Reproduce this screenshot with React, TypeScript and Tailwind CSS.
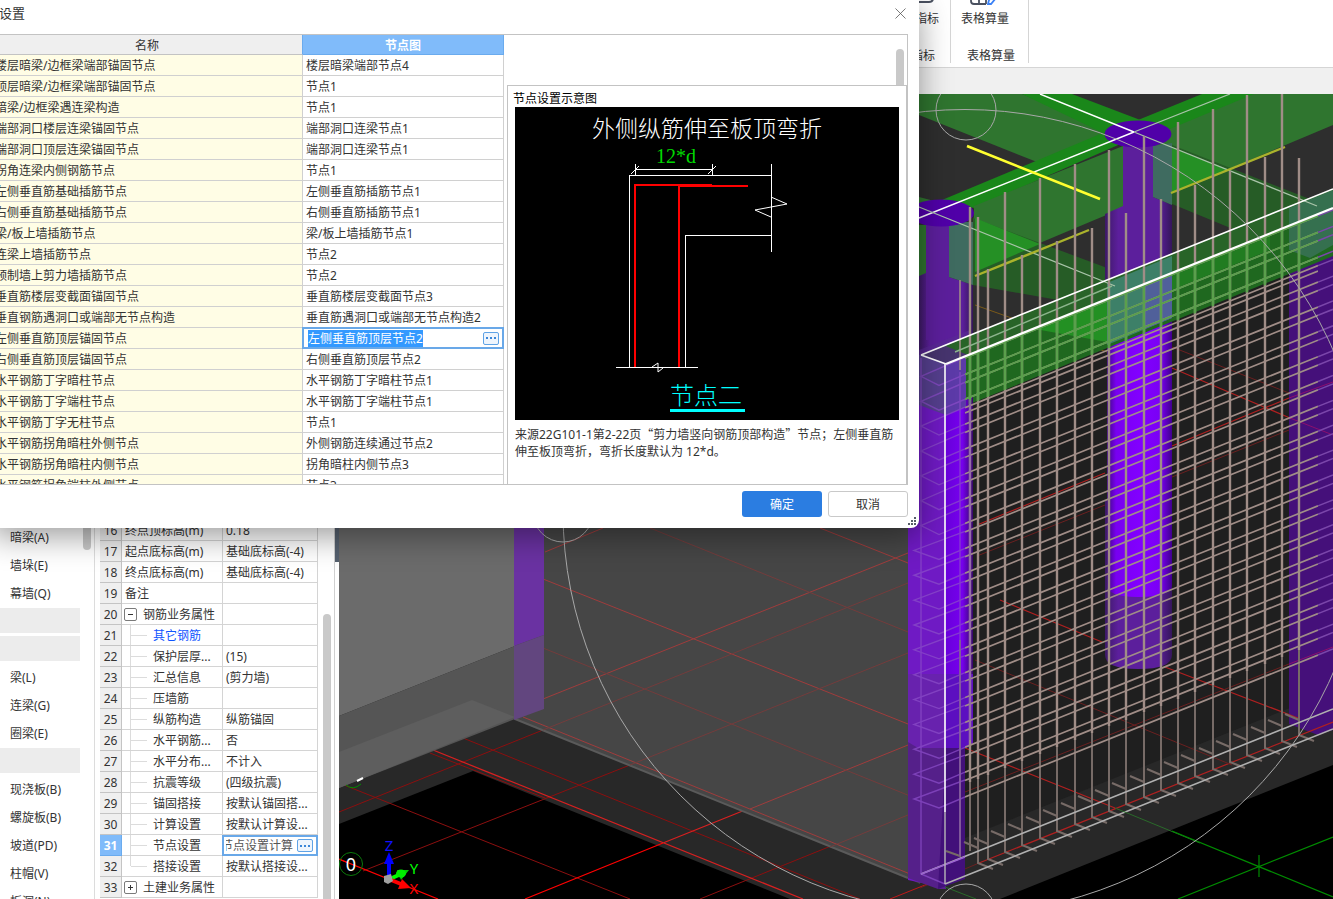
import React from "react";
import { X } from "lucide-react";

const nodeRows: [string, string][] = [
  ["楼层暗梁/边框梁端部锚固节点", "楼层暗梁端部节点4"],
  ["顶层暗梁/边框梁端部锚固节点", "节点1"],
  ["暗梁/边框梁遇连梁构造", "节点1"],
  ["端部洞口楼层连梁锚固节点", "端部洞口连梁节点1"],
  ["端部洞口顶层连梁锚固节点", "端部洞口连梁节点1"],
  ["拐角连梁内侧钢筋节点", "节点1"],
  ["左侧垂直筋基础插筋节点", "左侧垂直筋插筋节点1"],
  ["右侧垂直筋基础插筋节点", "右侧垂直筋插筋节点1"],
  ["梁/板上墙插筋节点", "梁/板上墙插筋节点1"],
  ["连梁上墙插筋节点", "节点2"],
  ["预制墙上剪力墙插筋节点", "节点2"],
  ["垂直筋楼层变截面锚固节点", "垂直筋楼层变截面节点3"],
  ["垂直钢筋遇洞口或端部无节点构造", "垂直筋遇洞口或端部无节点构造2"],
  ["左侧垂直筋顶层锚固节点", "左侧垂直筋顶层节点2"],
  ["右侧垂直筋顶层锚固节点", "右侧垂直筋顶层节点2"],
  ["水平钢筋丁字暗柱节点", "水平钢筋丁字暗柱节点1"],
  ["水平钢筋丁字端柱节点", "水平钢筋丁字端柱节点1"],
  ["水平钢筋丁字无柱节点", "节点1"],
  ["水平钢筋拐角暗柱外侧节点", "外侧钢筋连续通过节点2"],
  ["水平钢筋拐角暗柱内侧节点", "拐角暗柱内侧节点3"],
  ["水平钢筋拐角端柱外侧节点", "节点3"],
];
const EDITED_NODE = 13;

type Prop = { n: number; name: string; value: string; kind: "plain" | "open" | "closed" | "child" };
const propRows: Prop[] = [
  { n: 16, name: "终点顶标高(m)", value: "0.18", kind: "plain" },
  { n: 17, name: "起点底标高(m)", value: "基础底标高(-4)", kind: "plain" },
  { n: 18, name: "终点底标高(m)", value: "基础底标高(-4)", kind: "plain" },
  { n: 19, name: "备注", value: "", kind: "plain" },
  { n: 20, name: "钢筋业务属性", value: "", kind: "open" },
  { n: 21, name: "其它钢筋", value: "", kind: "child" },
  { n: 22, name: "保护层厚...", value: "(15)", kind: "child" },
  { n: 23, name: "汇总信息", value: "(剪力墙)", kind: "child" },
  { n: 24, name: "压墙筋", value: "", kind: "child" },
  { n: 25, name: "纵筋构造", value: "纵筋锚固", kind: "child" },
  { n: 26, name: "水平钢筋...", value: "否", kind: "child" },
  { n: 27, name: "水平分布...", value: "不计入", kind: "child" },
  { n: 28, name: "抗震等级", value: "(四级抗震)", kind: "child" },
  { n: 29, name: "锚固搭接", value: "按默认锚固搭...", kind: "child" },
  { n: 30, name: "计算设置", value: "按默认计算设...", kind: "child" },
  { n: 31, name: "节点设置", value: "节点设置计算", kind: "child" },
  { n: 32, name: "搭接设置", value: "按默认搭接设...", kind: "child" },
  { n: 33, name: "土建业务属性", value: "", kind: "closed" },
];

const navItems = ["暗梁(A)", "墙垛(E)", "幕墙(Q)", "", "", "梁(L)", "连梁(G)", "圈梁(E)", "", "现浇板(B)", "螺旋板(B)", "坡道(PD)", "柱帽(V)", "板洞(N)"];

function MoreButton({ label }: { label: string }) {
  return (
    <button aria-label={label} className="flex h-[13px] w-4 shrink-0 items-center justify-center gap-0.5 rounded-xs border border-[#5fa3e6] bg-[#eef5fd]">
      <span className="size-0.5 bg-[#3b86d8]" />
      <span className="size-0.5 bg-[#3b86d8]" />
      <span className="size-0.5 bg-[#3b86d8]" />
    </button>
  );
}

function Ribbon() {
  return (
    <header className="flex h-[68px] shrink-0 items-start overflow-hidden border-b border-[#d5d5d5] bg-white pl-[891px]">
      <div className="flex h-[63px] w-[60px] flex-col border-r border-[#d5d5d5]">
        <button className="flex w-12 flex-col items-end gap-1">
          <svg className="h-[7px] w-6" viewBox="0 0 24 7" fill="none" stroke="#4a5160" strokeWidth="2">
            <path d="M2 2h12q4 0 4-4" />
          </svg>
          <span>指标</span>
        </button>
        <span className="mt-[21px] w-11 text-right">指标</span>
      </div>
      <div className="flex h-[63px] w-[78px] flex-col border-r border-[#d5d5d5]">
        <button className="flex w-17 flex-col items-center gap-1">
          <svg className="h-[7px] w-8" viewBox="0 0 32 7" fill="none" stroke="#4a5160" strokeWidth="1.8">
            <path d="M2 -2v3q0 3 3 3h12M10 -2v6M17 0v4" />
            <path d="M27 -2l-5 6h-3l1-4 3-3" stroke="#3b82f6" />
          </svg>
          <span>表格算量</span>
        </button>
        <span className="mt-[21px] pl-4 whitespace-nowrap">表格算量</span>
      </div>
    </header>
  );
}

function ComponentNav() {
  return (
    <nav className="flex w-[95px] shrink-0 justify-between overflow-hidden border-r border-[#dcdcdc] bg-white pt-[429px]">
      <ul className="w-20">
        {navItems.map((t, i) => (
          <li key={i} className="h-7 pt-px">
            {t ? (
              <a href="#" className="block pl-2.5 leading-[27px]">{t}</a>
            ) : (
              <div className="h-[25px] bg-[#ececec]" />
            )}
          </li>
        ))}
      </ul>
      <div className="mr-[3px] h-[27px] w-2 rounded-b-full bg-[#c9c9c9]" />
    </nav>
  );
}

function PropName({ row }: { row: Prop }) {
  if (row.kind === "child") {
    return (
      <div className="flex h-5 items-center pl-2">
        <span className={row.n === 32 ? "h-2.5 w-px self-start bg-[#dcdcdc]" : "h-full w-px bg-[#dcdcdc]"} />
        <span className="h-px w-4 bg-[#dcdcdc]" />
        <span className={row.n === 21 ? "ml-1.5 pt-0.5 text-[#0f55ff]" : "ml-1.5 pt-0.5"}>{row.name}</span>
      </div>
    );
  }
  if (row.kind === "plain") return <div className="pt-0.5 pl-[3px]">{row.name}</div>;
  return (
    <div className="flex items-center gap-1.5 pl-0.5">
      <button aria-label={row.name} className="flex size-[13px] items-center justify-center rounded-xs border border-[#7a7a7a] bg-white">
        <svg className="size-[7px]" viewBox="0 0 7 7" stroke="#333" strokeWidth="1">
          <path d={row.kind === "open" ? "M1 3.5h5" : "M1 3.5h5M3.5 1v5"} />
        </svg>
      </button>
      <span className="pt-0.5">{row.name}</span>
    </div>
  );
}

function PropertyPanel() {
  return (
    <section className="flex w-[240px] shrink-0 overflow-hidden border-r border-[#d0d0d0] bg-white pt-[426px] pl-[5px]">
      <table className="w-[218px] shrink-0 table-fixed border-separate border-spacing-0 self-start">
        <colgroup>
          <col className="w-[22px]" />
          <col className="w-[101px]" />
          <col className="w-[95px]" />
        </colgroup>
        <tbody>
          {propRows.map((r) => {
            const on = r.n === 31;
            return (
              <tr key={r.n} className="h-[21px]">
                <th
                  className={
                    on
                      ? "h-[21px] border-r border-b border-[#6aabee] bg-[#80bbfa] p-0 pt-0.5 text-center font-bold text-white"
                      : "h-[21px] border-r border-b border-[#c4c4c4] bg-[#efefef] p-0 pt-0.5 text-center font-normal"
                  }
                >
                  {r.n}
                </th>
                <td className="border-r border-b border-[#d4d4d4] p-0 whitespace-nowrap"><PropName row={r} /></td>
                {on ? (
                  <td className="p-0">
                    <div className="-ml-px flex h-[21px] items-center gap-1 border-2 border-[#69a8e8] bg-white pr-[3px] pl-0.5">
                      <div className="flex flex-1 justify-end overflow-hidden">
                        <input aria-label="节点设置" defaultValue={r.value} className="w-[72px] shrink-0 text-[#555] outline-none" />
                      </div>
                      <MoreButton label="打开节点设置" />
                    </div>
                  </td>
                ) : (
                  <td className="border-r border-b border-[#d4d4d4] p-0 pt-0.5 pl-[3px] whitespace-nowrap">{r.value}</td>
                )}
              </tr>
            );
          })}
        </tbody>
      </table>
      <div className="mt-[94px] ml-[5px] w-2 rounded-t-full bg-[#c9c9c9]" />
    </section>
  );
}

/* Vertical bars of the wall: x and top. */
const bars: [number, number][] = [
  [970, 207], [978, 217], [988, 269], [1005, 192], [1022, 255], [1040, 178], [1057, 241], [1075, 164], [1092, 228], [1109, 150], [1126, 213],
  [1144, 136], [1161, 199], [1178, 122], [1195, 185], [1213, 109], [1230, 171], [1247, 95], [1265, 157], [1282, 90], [1299, 158],
];
/* Heights of the horizontal bars where they meet the end column. */
const levels = Array.from({ length: 18 }, (_, i) => 797 - i * 24.86);
const headLevels = Array.from({ length: 5 }, (_, i) => 797 - (i + 18) * 24.86);

function Scene() {
  return (
    <svg className="h-full w-full" viewBox="339 94 994 805" preserveAspectRatio="xMinYMin slice" role="img" aria-label="三维视图" fill="none">
      <defs>
        <linearGradient id="shaft" x1="0" x2="1">
          <stop offset="0" stopColor="#3f0a80" />
          <stop offset="0.14" stopColor="#7800f0" />
          <stop offset="0.5" stopColor="#8200ff" />
          <stop offset="0.82" stopColor="#7a00f5" />
          <stop offset="1" stopColor="#40008c" />
        </linearGradient>
        <linearGradient id="shaftDim" x1="0" x2="1">
          <stop offset="0" stopColor="#3d1a66" />
          <stop offset="0.2" stopColor="#5c1f9c" />
          <stop offset="0.8" stopColor="#5c1f9c" />
          <stop offset="1" stopColor="#35165a" />
        </linearGradient>
        <linearGradient id="cornerShaft" x1="0" x2="1">
          <stop offset="0" stopColor="#6a00dc" />
          <stop offset="0.6" stopColor="#7600ee" />
          <stop offset="1" stopColor="#36086a" />
        </linearGradient>
        <clipPath id="mesh">
          <path d="M965 358L1318 214V900H965Z" />
        </clipPath>
        <clipPath id="band">
          <path d="M965 356L1333 208V258L965 406Z" />
        </clipPath>
      </defs>
      <rect x="339" y="94" width="994" height="805" fill="#000" />
      {/* floor slab */}
      <path d="M339 824L473 771L790 899H1000L1333 765V500H339Z" fill="#282828" />
      <rect x="900" y="94" width="433" height="300" fill="#2e2e2e" />
      {/* floor grid */}
      <g stroke="#8c0f0f">
        <path d="M339 783L630 899M363 871L630 765M339 812L543 730M463 738L860 899M700 899L920 810M430 753L545 798" />
        <path d="M890 899L980 863" stroke="#c01818" />
      </g>
      <path d="M339 859L438 899M525 899L663 843" stroke="#ff0000" strokeWidth="1.2" />
      <path d="M663 843L760 804M433 750L803 899" stroke="#d82020" strokeWidth="1.2" />
      {/* far walls */}
      <path d="M515 500H920V884L908 878L515 719Z" fill="#464646" />
      <path d="M515 719L908 878" stroke="#5a5a5a" strokeWidth="2" />
      <g stroke="#a03c3c">
        <path d="M543 699L908 553M545 552L603 528M523 717L920 878M543 579L908 724M820 528L908 563M750 809L908 745" />
        <path d="M543 730L908 583M630 765L908 653M543 648L920 800M650 528L908 632M830 847L920 810" stroke="#743c3c" />
      </g>
      <path d="M339 500H515V646L339 716Z" fill="#6b6b6b" />
      <path d="M339 716L515 646V719L339 788Z" fill="#555" />
      <path d="M339 752L472 700L515 717L339 788Z" fill="#5e5e5e" />
      <path d="M514 500H544V635L514 646Z" fill="#6a32a2" />
      <path d="M514 646L544 635V709L514 720Z" fill="#62467f" />

      {/* selected wall face */}
      <path d="M946 300L1333 150V729L946 884Z" fill="#1f1f1f" />
      <path d="M965 838L1300 704L1333 716L1333 729L946 884Z" fill="#282828" />
      <path d="M921 355L1333 189V94H919V355Z" fill="#2e2e2e" />

      {/* beams */}
      <path d="M919 94H1022L1105 128V134L1037 162L919 115Z" fill="#2f752f" />
      <path d="M1022 94H1072L1143 121L1105 134Z" fill="#1a871a" />
      <path d="M1138 120L1202 94H1256L1158 136Z" fill="#1a871a" />
      <path d="M1254 94H1333V125L1172 193L1153 150V136Z" fill="#2f752f" />
      <path d="M942 200L1105 132L1125 142L974 208Z" fill="#1a871a" />
      <path d="M974 206L1123 146V208L973 271Z" fill="#2f752f" />
      <path d="M919 197L942 203L919 210ZM919 225H927V276L919 278Z" fill="#2f752f" />
      <path d="M973 218L1118 272V290L1058 300L973 285Z" fill="#265c26" />
      <path d="M975 218L1040 244L975 272Z" fill="#259025" />
      <path d="M1172 145L1320 203L1250 236L1172 204Z" fill="#265c26" />
      <path d="M1172 148L1230 170L1172 192Z" fill="#259025" />

      {/* columns behind the wall */}
      <path d="M919 276L926 273V215H949V277L973 285V380H919Z" fill="url(#shaftDim)" />
      <path d="M926 215H949V340H926Z" fill="#5c1f9c" />
      <path d="M949 222H973V285L949 277Z" fill="#3f6b60" />
      <path d="M1105 214L1123 206V140H1153V197L1172 205V300H1105Z" fill="url(#shaftDim)" />
      <path d="M1123 140H1153V300H1123Z" fill="#5c1f9c" />
      <path d="M1153 146L1172 143V205L1153 197Z" fill="#3f6b60" />
      <ellipse cx="941" cy="213" rx="33" ry="13.5" fill="#5000a8" />
      <ellipse cx="1138" cy="134" rx="33.5" ry="13.5" fill="#5000a8" />
      <path d="M919 350L970 330V420H919Z" fill="#5a2a96" opacity=".7" />
      <path d="M1105 500H1172V655Q1172 669 1138 669Q1105 669 1105 655Z" fill="url(#shaftDim)" />
      <path d="M1107 300H1172V585Q1172 597 1138 597Q1107 597 1107 585Z" fill="url(#shaft)" />
      <path d="M1289 225L1333 208V730L1318 735L1289 724Z" fill="#45107a" />

      {/* grid seen through the wall */}
      <g stroke="#b02020">
        <path d="M965 748L1115 808M1000 600L1102 642M1165 667L1298 718M1172 368L1290 418M977 525L1105 473M1172 446L1289 398M979 863L1333 722" strokeWidth="1.2" />
        <path d="M977 556L1105 505M1172 477L1289 430M965 792L1289 664M975 660L1232 765M1172 347L1289 393M920 888L979 863" stroke="#6b2020" />
        <path d="M1289 398L1333 382M1290 418L1333 435M1289 664L1333 647" stroke="#8c0f6e" />
        <path d="M990 392L1107 345M975 305L1107 352" stroke="#7a5a1a" />
      </g>

      {/* wall head */}
      <path d="M921 355L1333 189V208L946 364Z" fill="#286428" />
      <path d="M965 356L1333 208V256L965 406Z" fill="#1f681f" />
      <path d="M1035 329L1107 300V342Z" fill="#239023" />
      <path d="M1172 272L1270 233V250L1172 290Z" fill="#239023" opacity=".5" />
      <path d="M1107 283L1172 256V318L1107 345Z" fill="#3d8068" />
      <path d="M1145 284L1172 274V318L1145 329Z" fill="#50609a" />
      <path d="M1289 208L1333 190V245L1310 258L1289 250Z" fill="#35704f" />

      {/* end column */}
      <path d="M908 500L919 355L946 364V888L908 880Z" fill="#6f1ac4" />
      <path d="M946 407L973 396V743Q970 747 965 748H946Z" fill="url(#cornerShaft)" />
      <path d="M946 364L966 356V407L946 415Z" fill="#5c3aa8" />
      <path d="M919 355L946 364V415L919 405Z" fill="#553f8e" />
      <path d="M921 355L943 345L968 355L946 364Z" fill="#46346e" />
      <path d="M908 674H946V748H915L908 742Z" fill="#6822ae" />
      <path d="M946 674H973V743Q970 747 965 748H946Z" fill="#5c0fc0" />
      <path d="M908 742L918 748H946V889H938L908 878Z" fill="#55208a" />
      <path d="M946 748H965V879L938 889Z" fill="#42107a" />

      {/* centre lines */}
      <path d="M919 218L1134 132M1040 94L1134 132" stroke="#fff" strokeWidth="1.4" />
      <path d="M1134 132L1230 94M1134 132L1317 206M919 207L1115 286" stroke="#a9c4a9" strokeWidth="1.3" />
      <path d="M967 146L1100 199" stroke="#ffff30" strokeWidth="2.6" />
      <path d="M975 276L1089 230M1171 193L1285 147" stroke="#aab32c" strokeWidth="2.4" />

      {/* feet of the bars */}
      <g stroke="#776b67" strokeWidth="2">
        {bars.slice(1).map(([x]) => {
          const y = Math.round(859 - (x - 988) * 0.4);
          return <path key={x} d={`M${x} ${y - 170}V${y}L${x + 15} ${y + 6}M${x - 14} ${y - 21}L${x} ${y - 15}`} />;
        })}
        <path d="M960 640V856L946 851M970 640V851" />
      </g>
      {/* horizontal bars */}
      <g clipPath="url(#mesh)" stroke="#a08d87" strokeWidth="1.7">
        {levels.concat(headLevels).map((y) => (
          <path key={y} d={`M965 ${y}l353 -142M965 ${y - 16.5}l353 -142`} />
        ))}
        <path d="M965 413l353 -142" />
      </g>
      <g stroke="#a08d87" strokeWidth="2.4">
        {bars.map(([x, top]) => (
          <path key={x} d={`M${x} ${top}V${Math.round(796 - (x - 965) * 0.4) - 12}`} />
        ))}
        <path d="M960 280V370" strokeWidth="1.6" />
      </g>
      <g clipPath="url(#band)" stroke="#5aa04c" strokeWidth="1.7">
        {levels.slice(14).concat(headLevels).map((y) => (
          <path key={y} d={`M965 ${y}l353 -142M965 ${y - 16.5}l353 -142`} />
        ))}
        {bars.map(([x]) => (
          <path key={x} d={`M${x} 180V420`} strokeWidth="2.4" />
        ))}
      </g>
      {/* bars over the purple pier */}
      <g stroke="#7a46aa" strokeWidth="1.5">
        {levels.map((y) => (
          <path key={y} d={`M1318 ${y - 142}l15 -6M1318 ${y - 158.5}l15 -6`} />
        ))}
      </g>
      <g stroke="#8a4cc8" strokeWidth="1.4" opacity=".75">
        {levels.map((y) => (
          <path key={y} d={`M965 ${y - 17}L${y > 540 ? 914 : 921} ${y + 2}L939 ${y + 11}L965 ${y}`} />
        ))}
        <path d="M921 358V874L945 884M960 372V856M970 400V740" />
      </g>

      {/* wall outline */}
      <path d="M921 874L1333 709M945 884L1333 729" stroke="#b0b0b0" strokeWidth="1.6" />
      <path d="M921 874L965 857" stroke="#9a62d0" strokeWidth="1.6" />
      <path d="M921 355L1333 189M945 812V364M921 355L946 364" stroke="#fff" strokeWidth="1.6" />
      <path d="M946 364L1333 208" stroke="#fff" strokeWidth="2.2" />
      <path d="M945 812V884" stroke="#b8b8b8" strokeWidth="1.4" />
      <path d="M955 352L1112 286" stroke="#8cb48c" strokeWidth="1.4" />

      {/* outer grid */}
      <path d="M1115 808L1200 843M945 887L976 899" stroke="#2a6a2a" />
      <path d="M1172 831L1333 897M1178 899L1333 837M1259 855V877" stroke="#008c00" strokeWidth="1.2" />

      {/* orbit gizmo */}
      <g stroke="#a8a8a8" strokeWidth="1">
        <circle cx="965" cy="511.500" r="402" />
        <circle cx="966" cy="110" r="30" />
        <circle cx="966" cy="914" r="30" />
        <circle cx="563" cy="512" r="30" />
      </g>

      {/* axis labels and triad */}
      <path d="M346 785Q353 791 361 784" stroke="#008c00" />
      <path d="M357 781L363 778" stroke="#fff" strokeWidth="2" />
      <circle cx="351" cy="864" r="11.500" stroke="#0a7a0a" />
      <path d="M341 860L346 862" stroke="#ff0000" />
      <text x="351" y="871" textAnchor="middle" fill="#fff" fontSize="18" fontFamily="Noto Sans, sans-serif">0</text>
      <path d="M389 878V860" stroke="#00f" strokeWidth="4" />
      <path d="M384 864L389 852L394 864Z" fill="#00f" />
      <path d="M392 878L401 874" stroke="#0f0" strokeWidth="4" />
      <path d="M397 870L409 870L401 880Z" fill="#0c0" />
      <ellipse cx="401" cy="873.500" rx="5" ry="4" fill="#0e0" />
      <path d="M391 880L401 884" stroke="red" strokeWidth="4" />
      <path d="M402 879L411 888L398 889Z" fill="red" />
      <path d="M384 876L391 874L393 881L388 884L384 882Z" fill="#a0a0a0" />
      <g fontSize="15" fontFamily="Noto Sans, sans-serif" textAnchor="middle">
        <text x="389" y="851" fill="#1010ff">Z</text>
        <text x="414" y="874" fill="#0f0">Y</text>
        <text x="414" y="894" fill="red">X</text>
      </g>
    </svg>
  );
}

function NodeDiagram() {
  return (
    <svg className="block h-[313px] w-96" viewBox="515 107 384 313" fill="none" stroke="#fff" shapeRendering="crispEdges">
      <rect x="515" y="107" width="384" height="313" fill="#000" stroke="none" />
      <g stroke="none" fontFamily="'Noto Sans CJK SC', sans-serif" fontWeight="300">
        <text x="592" y="137" fill="#fff" fontSize="23">外侧纵筋伸至板顶弯折</text>
        <text x="656" y="163" fill="#00d800" fontSize="20" fontFamily="'Liberation Serif', serif" fontWeight="400">12*d</text>
        <text x="670" y="404" fill="#00ffff" fontSize="24">节点二</text>
      </g>
      <path d="M629.500 367V175.500H771.500M685.500 367V235.500H771.500M771.500 164V252M635 169.500H713M635.500 164V175M712.500 164V175M616 367.500H698" />
      <g shapeRendering="auto">
        <path d="M631 174L639 166M708 174L716 166M771 197L787 204L755 210L771 217M652 367L658 363V372L663 368" />
      </g>
      <path d="M635 367V185H712M679 367V186H748" stroke="red" strokeWidth="2" />
      <path d="M670 410.500H745" stroke="#0ff" strokeWidth="3" />
    </svg>
  );
}

function NodeDialog() {
  return (
    <div role="dialog" aria-label="节点设置" className="absolute top-0 -left-2 flex w-[927px] flex-col rounded-br-lg bg-white shadow-[0_8px_32px_rgba(0,0,0,0.4)]">
      <div className="flex h-[34px] items-center justify-between pr-[9px] pl-[7px]">
        <h1 className="pb-1.5 text-[13px]">设置</h1>
        <button aria-label="关闭" className="mb-[7px]"><X size={19} strokeWidth={1} color="#555" /></button>
      </div>
      <div className="mr-[11px] flex h-[451px] overflow-hidden border-y border-r border-[#c3c3c3]">
        <table className="w-[512px] shrink-0 table-fixed border-separate border-spacing-0 self-start">
          <colgroup>
            <col className="w-[311px]" />
            <col className="w-[201px]" />
          </colgroup>
          <thead>
            <tr>
              <th className="h-5 border-r border-b border-r-[#6aabee] border-b-[#c3c3c3] bg-[#efefef] p-0 pt-0.5 font-normal">名称</th>
              <th className="h-5 border-r border-b border-[#6aabee] bg-[#80bbfa] p-0 pt-0.5 font-bold text-white">节点图</th>
            </tr>
          </thead>
          <tbody>
            {nodeRows.map(([name, node], i) => (
              <tr key={i}>
                <td className="h-[21px] border-r border-b border-[#d0d0d0] bg-[#fffde5] p-0 pt-0.5 pl-[3px] whitespace-nowrap">{name}</td>
                {i === EDITED_NODE ? (
                  <td className="p-0">
                    <div className="-mt-px -ml-px flex h-[22px] items-center justify-between border-2 border-[#69a8e8] bg-white pr-[3px] pl-1">
                      <input aria-label={name} defaultValue={node} className="h-[17px] w-[115px] bg-[#3399ff] text-white outline-none" />
                      <MoreButton label="选择节点" />
                    </div>
                  </td>
                ) : (
                  <td className="h-[21px] border-r border-b border-[#d0d0d0] p-0 pt-0.5 pl-[3px] whitespace-nowrap">{node}</td>
                )}
              </tr>
            ))}
          </tbody>
        </table>
        <div className="ml-[3px] flex flex-1 flex-col">
          <div className="mt-3.5 mr-[3px] h-9 w-2 self-end rounded-t-full bg-[#c9c9c9]" />
          <section className="flex-1 border-t border-r border-l border-[#c3c3c3] bg-white px-[7px] pt-1">
            <h2 className="-ml-0.5 leading-[17px] text-black">节点设置示意图</h2>
            <NodeDiagram />
            <p className="mt-[5px] leading-[17px] whitespace-nowrap">
              来源22G101-1第2-22页<span className="font-['Noto_Sans_CJK_SC',sans-serif]">“</span>剪力墙竖向钢筋顶部构造
              <span className="font-['Noto_Sans_CJK_SC',sans-serif]">”</span>节点；左侧垂直筋
              <br />
              伸至板顶弯折，弯折长度默认为 12*d。
            </p>
          </section>
        </div>
      </div>
      <div className="flex h-[43px] items-start justify-end gap-1.5 pt-1.5 pr-[11px]">
        <button className="h-[26px] w-20 rounded-[3px] bg-[#2b7de1] pt-0.5 text-white">确定</button>
        <button className="h-[26px] w-20 rounded-[3px] border border-[#c9c9c9] bg-white pt-0.5">取消</button>
      </div>
      <svg className="absolute right-[3px] bottom-[3px] size-2" viewBox="0 0 8 8" fill="#555c68">
        <path d="M6 0h2v2H6zM3 3h2v2H3zM6 3h2v2H6zM0 6h2v2H0zM3 6h2v2H3zM6 6h2v2H6z" />
      </svg>
    </div>
  );
}

export default function App() {
  return (
    <div className="relative flex h-screen flex-col overflow-hidden bg-[#f0f0f0] font-['Noto_Sans','Noto_Sans_CJK_SC',sans-serif] text-xs text-[#333]" lang="zh-CN">
      <Ribbon />
      <div className="h-[26px] shrink-0 bg-[#f0f0f0]" />
      <div className="flex min-h-0 flex-1">
        <ComponentNav />
        <PropertyPanel />
        <div className="w-1 shrink-0 bg-white">
          <div className="h-[468px] bg-[#56616f]" />
        </div>
        <main className="min-w-0 flex-1 overflow-hidden"><Scene /></main>
      </div>
      <NodeDialog />
    </div>
  );
}
